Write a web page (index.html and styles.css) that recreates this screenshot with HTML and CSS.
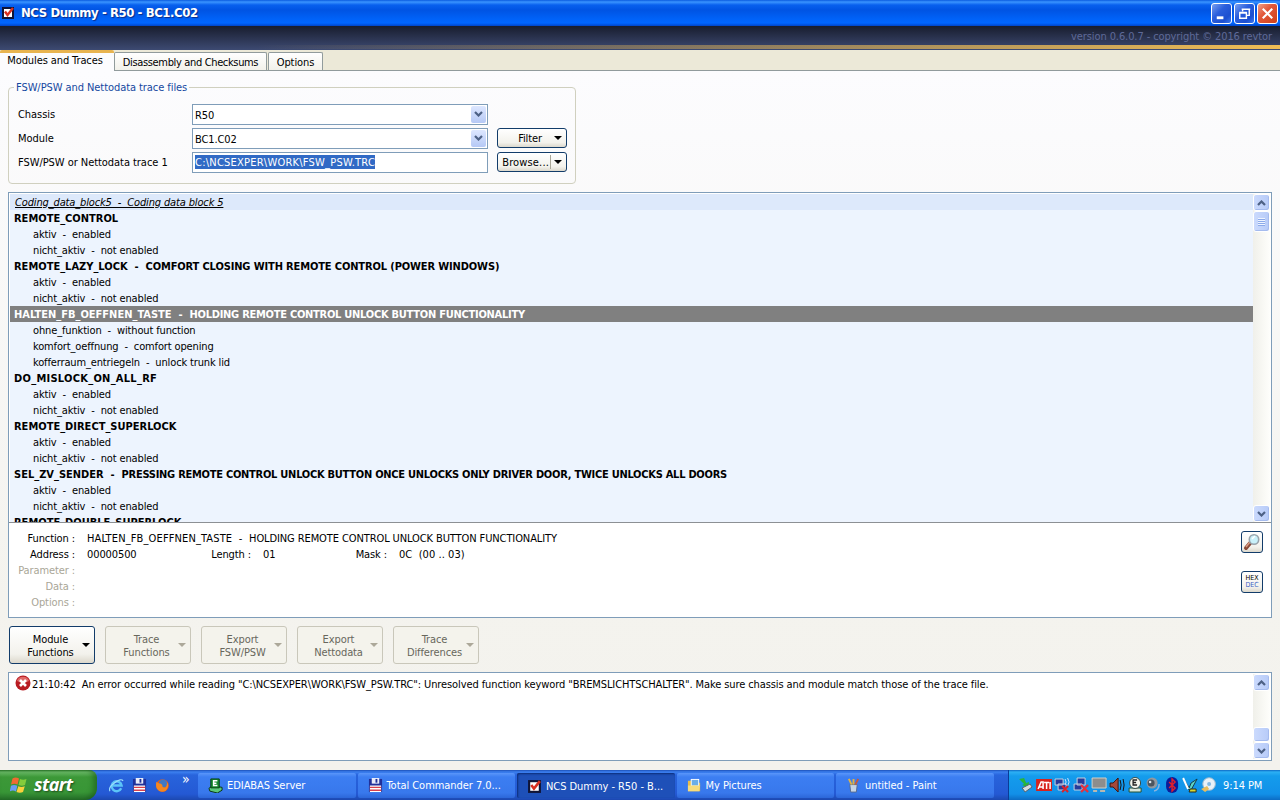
FILE: index.html
```
<!DOCTYPE html>
<html lang="en">
<head>
  <meta charset="UTF-8">
  <meta name="viewport" content="width=device-width, initial-scale=1.0">
  <title>NCS Dummy - R50 - BC1.C02</title>
  <link rel="stylesheet" href="styles.css">
</head>
<body>
  <!-- shared icons -->
  <svg class="defs">
    <symbol id="down" viewBox="0 0 9 6"><path d="M1 1l3.5 3.5L8 1" fill="none" stroke="#4d6185" stroke-width="2.2"/></symbol>
    <symbol id="up" viewBox="0 0 9 6"><path d="M1 5l3.5-3.5L8 5" fill="none" stroke="#4d6185" stroke-width="2.2"/></symbol>
    <symbol id="app" viewBox="0 0 12 12"><path d="M0 0h12v12H0z" fill="#101435"/><path d="M2 2h8v8H2z" fill="#fff"/><path d="M3 4.500l2.500 3.500L11 1" fill="none" stroke="#d83020" stroke-width="2.400"/></symbol>
    <symbol id="floppy" viewBox="0 0 16 16"><path d="M1 1h14v14H1z" fill="#20309a"/><path d="M4 0h8v6H4z" fill="#e8ecfa"/><path d="M8 1h2v4H8z" fill="#20309a"/><path d="M2 8h12v7H2z" fill="#fff"/><path d="M2 10h12M2 13h12" stroke="#d8404c" stroke-width="1.5"/></symbol>
    <symbol id="ediabas" viewBox="0 0 16 16"><path d="M1 11l4-3 10 2v3l-5 3-8-2z" fill="#5cc878" stroke="#05320f"/><path d="M3 1h9v9.500H3z" fill="#178c2e" stroke="#06400f"/><path d="M10 3H6v5h4M6 5.500h3" fill="none" stroke="#fff" stroke-width="1.6"/></symbol>
  </svg>

  <div class="titlebar">
    <svg class="app-icon"><use href="#app"/></svg>
    <span class="title">NCS Dummy - R50 - BC1.C02</span>
    <div class="window-buttons">
      <div class="win-btn"><svg viewBox="0 0 20 20"><path d="M5 14.500h7" stroke="#fff" stroke-width="3"/></svg></div>
      <div class="win-btn"><svg viewBox="0 0 20 20"><path d="M8 8V5.500h7V12h-3M7 5.500h9" fill="none" stroke="#fff" stroke-width="1.500"/><path d="M5 9.500h7V15H5zM4.500 9h8" fill="none" stroke="#fff" stroke-width="1.500"/></svg></div>
      <div class="win-btn close"><svg viewBox="0 0 20 20"><path d="M5 5l10 10M15 5L5 15" stroke="#fff" stroke-width="2.200"/></svg></div>
    </div>
  </div>

  <div class="banner">version 0.6.0.7 - copyright © 2016 revtor</div>

  <div class="tabs">
    <div class="tab active">Modules and Traces</div>
    <div class="tab checksums">Disassembly and Checksums</div>
    <div class="tab options">Options</div>
  </div>

  <main>
    <fieldset class="files">
      <legend>FSW/PSW and Nettodata trace files</legend>
      <div class="field">
        <label>Chassis</label>
        <div class="combo">R50<span class="drop"><svg><use href="#down"/></svg></span></div>
      </div>
      <div class="field">
        <label>Module</label>
        <div class="combo">BC1.C02<span class="drop"><svg><use href="#down"/></svg></span></div>
        <button class="small-btn filter"><span>Filter</span><i class="arrow"></i></button>
      </div>
      <div class="field">
        <label>FSW/PSW or Nettodata trace 1</label>
        <div class="combo"><span class="selected">C:\NCSEXPER\WORK\FSW_PSW.TRC</span></div>
        <button class="small-btn browse"><span>Browse...</span><i class="split"></i><i class="arrow"></i></button>
      </div>
    </fieldset>

    <div class="panel">
      <div class="list-area">
        <div class="list">
          <div class="row block"><u>Coding_data_block5&nbsp; -&nbsp; Coding data block 5</u></div>
          <div class="row func"><span class="key">REMOTE_CONTROL</span></div>
          <div class="row">aktiv&nbsp; -&nbsp; enabled</div>
          <div class="row">nicht_aktiv&nbsp; -&nbsp; not enabled</div>
          <div class="row func lazy"><span class="key">REMOTE_LAZY_LOCK&nbsp; -&nbsp; </span>COMFORT CLOSING WITH REMOTE CONTROL (POWER WINDOWS)</div>
          <div class="row">aktiv&nbsp; -&nbsp; enabled</div>
          <div class="row">nicht_aktiv&nbsp; -&nbsp; not enabled</div>
          <div class="row func current"><span class="key">HALTEN_FB_OEFFNEN_TASTE&nbsp; -&nbsp; </span>HOLDING REMOTE CONTROL UNLOCK BUTTON FUNCTIONALITY</div>
          <div class="row">ohne_funktion&nbsp; -&nbsp; without function</div>
          <div class="row">komfort_oeffnung&nbsp; -&nbsp; comfort opening</div>
          <div class="row">kofferraum_entriegeln&nbsp; -&nbsp; unlock trunk lid</div>
          <div class="row func"><span class="key wide">DO_MISLOCK_ON_ALL_RF</span></div>
          <div class="row">aktiv&nbsp; -&nbsp; enabled</div>
          <div class="row">nicht_aktiv&nbsp; -&nbsp; not enabled</div>
          <div class="row func"><span class="key">REMOTE_DIRECT_SUPERLOCK</span></div>
          <div class="row">aktiv&nbsp; -&nbsp; enabled</div>
          <div class="row">nicht_aktiv&nbsp; -&nbsp; not enabled</div>
          <div class="row func"><span class="key">SEL_ZV_SENDER&nbsp; -&nbsp; </span>PRESSING REMOTE CONTROL UNLOCK BUTTON ONCE UNLOCKS ONLY DRIVER DOOR, TWICE UNLOCKS ALL DOORS</div>
          <div class="row">aktiv&nbsp; -&nbsp; enabled</div>
          <div class="row">nicht_aktiv&nbsp; -&nbsp; not enabled</div>
          <div class="row func"><span class="key">REMOTE_DOUBLE_SUPERLOCK</span></div>
        </div>
        <div class="scrollbar">
          <div class="sb-btn"><svg><use href="#up"/></svg></div>
          <div class="thumb grip"><i></i></div>
          <div class="sb-btn last"><svg><use href="#down"/></svg></div>
        </div>
      </div>
      <div class="info">
        <div class="details">
          <div class="line"><b>Function :</b><span class="name">HALTEN_FB_OEFFNEN_TASTE&nbsp; -&nbsp;&nbsp;</span><span>HOLDING REMOTE CONTROL UNLOCK BUTTON FUNCTIONALITY</span></div>
          <div class="line"><b>Address :</b><span class="address">00000500</span><b class="length">Length :</b><span class="len-value">01</span><b class="mask">Mask :</b><span class="mask-value">0C&nbsp; (00 .. 03)</span></div>
          <div class="line off"><b>Parameter :</b></div>
          <div class="line off"><b>Data :</b></div>
          <div class="line off"><b>Options :</b></div>
        </div>
        <div class="tools">
          <button class="tool-btn"><svg viewBox="0 0 18 18"><path d="M3 15l5-6" stroke="#8a4a38" stroke-width="4" stroke-linecap="round"/><path d="M3 14l4-5" stroke="#d89a80" stroke-width="1.500"/><circle cx="11" cy="6.500" r="4.700" fill="#c9f1fa" stroke="#98a4ac" stroke-width="1.600"/><path d="M9 6l3-3" stroke="#fff" stroke-width="1.500"/></svg></button>
          <button class="tool-btn hex">HEX<br><em>DEC</em></button>
        </div>
      </div>
    </div>

    <div class="actions">
      <button class="action"><span>Module<br>Functions</span><i class="arrow"></i></button>
      <button class="action" disabled><span>Trace<br>Functions</span><i class="arrow"></i></button>
      <button class="action" disabled><span>Export<br>FSW/PSW</span><i class="arrow"></i></button>
      <button class="action" disabled><span>Export<br>Nettodata</span><i class="arrow"></i></button>
      <button class="action" disabled><span>Trace<br>Differences</span><i class="arrow"></i></button>
    </div>

    <div class="log">
      <div class="log-line">
        <svg viewBox="0 0 16 16"><circle cx="8" cy="8" r="7.500" fill="#b81c22"/><path d="M2 6a6.300 6 0 0 1 12 0q-6 3-12 0z" fill="#e06a68"/><path d="M5 5l6 6M11 5l-6 6" stroke="#fff" stroke-width="2.600"/></svg>
        <span>21:10:42&nbsp; An error occurred while reading "C:\NCSEXPER\WORK\FSW_PSW.TRC": Unresolved function keyword "BREMSLICHTSCHALTER". Make sure chassis and module match those of the trace file.</span>
      </div>
      <div class="scrollbar">
        <div class="sb-btn"><svg><use href="#up"/></svg></div>
        <div class="thumb end"></div>
        <div class="sb-btn"><svg><use href="#down"/></svg></div>
      </div>
    </div>
  </main>

  <div class="taskbar">
    <div class="start">
      <svg viewBox="0 0 18 18"><path d="M2.500 2.500q3-2 6.500 0L7.500 8.500Q4.500 7 1 8.500z" fill="#f06a32"/><path d="M10 3q3 1.500 6.500 0L15 9q-3 1.500-6.500 0z" fill="#85cc3c"/><path d="M1 9.800q3-1.500 6.300 0L6 15.500q-3-1.800-6.300 0z" fill="#6b9cf5"/><path d="M8.300 10.300q3 1.500 6.500 0L13 16q-3 1.500-6.500 0z" fill="#fbd03c"/></svg>
      <span>start</span>
    </div>
    <div class="quick">
      <svg viewBox="0 0 16 16"><path d="M13 11a5.300 5.300 0 1 1 .4-3H4" fill="none" stroke="#5cc4f8" stroke-width="2.600"/><path d="M1 14Q-1 10 6 5T15 3" fill="none" stroke="#9adcfc" stroke-width="1.300"/></svg>
      <svg viewBox="0 0 16 16"><use href="#floppy"/></svg>
      <svg viewBox="0 0 16 16"><circle cx="8" cy="8" r="6.700" fill="#e85a18"/><circle cx="8.500" cy="6" r="4.500" fill="#3f78c4"/><path d="M1.500 4q2 2 5 2l1.500 2q-1 2 3 2 2.500-2 1.500-6 3.500 5-1 9.500-6 3-9.500-2-1.500-3-.5-7.500z" fill="#f5871f"/></svg>
      <span>»</span>
    </div>
    <div class="tasks">
      <div class="task"><svg viewBox="0 0 16 16"><use href="#ediabas"/></svg>EDIABAS Server</div>
      <div class="task"><svg viewBox="0 0 16 16"><use href="#floppy"/></svg>Total Commander 7.0...</div>
      <div class="task pressed"><svg viewBox="-1 -1 14 14"><use href="#app" width="12" height="12"/></svg>NCS Dummy - R50 - B...</div>
      <div class="task"><svg viewBox="0 0 16 16"><path d="M1 3h6l1 2h6v9H1z" fill="#e8bd48"/><path d="M4 1h9v8H4z" fill="#fff"/><path d="M5 2h7v6H5z" fill="#6baee8"/><path d="M1 8h13l-1 6H1z" fill="#f7dc7c"/></svg>My Pictures</div>
      <div class="task"><svg viewBox="0 0 16 16"><path d="M4 7h8l-1 8H5z" fill="#c7d4e4" stroke="#546a90"/><path d="M6 7L3 1M8 7V1" stroke="#e3b341" stroke-width="2"/><path d="M10 7l3-6" stroke="#c75b3a" stroke-width="2"/></svg>untitled - Paint</div>
    </div>
    <div class="tray">
      <svg viewBox="0 0 16 16"><path d="M1 2l5-1 2 5 3-1-1 6-6-3 2-1z" fill="#29b43c"/><path d="M4 11l8-4 2 3-7 5z" fill="#d5dbe0" stroke="#57626e"/></svg>
      <svg viewBox="0 0 16 16"><path d="M0 2h16v12H0z" fill="#d8231c"/><path d="M2 12l3-7h2v7M3 10h4M8 5.500h5M10.500 5v7M14 5v7" fill="none" stroke="#fff" stroke-width="1.500"/></svg>
      <svg viewBox="0 0 16 16"><path d="M1 2h8v6H1zM4 7h8v6H4z" fill="#263c9c" stroke="#c6cfdd"/><path d="M11 2q2 3 0 6M13.500 1q3 4 0 8" fill="none" stroke="#c6e0ff"/><path d="M8 9l6 6M14 9l-6 6" stroke="#d8242c" stroke-width="2"/></svg>
      <svg viewBox="0 0 16 16"><path d="M4 1h8v7H4zM1 7h8v6H1z" fill="#263c9c" stroke="#c6cfdd"/><path d="M8 8l7 7M15 8l-7 7" stroke="#e8303a" stroke-width="2.200"/></svg>
      <svg viewBox="0 0 16 16"><path d="M1 1h14v10H1z" fill="#8d8d8d" stroke="#d2d0c6"/><path d="M2 13h4v2H2zM9 13h5v2H9z" fill="#b8b8b0"/></svg>
      <svg viewBox="0 0 16 16"><path d="M1 6h3l5-5v14L4 10H1z" fill="#a5483a" stroke="#40150e"/><path d="M11 3q2 5 0 10M14 2q2 6 0 12" fill="none" stroke="#161616"/></svg>
      <svg viewBox="0 0 16 16"><path d="M2 11h12v4H2z" fill="#d6e6dc" stroke="#235234"/><circle cx="8" cy="6" r="5.500" fill="#f5f7ee" stroke="#3c4c46"/><path d="M10 3H6v5h4M6 5.500h3" fill="none" stroke="#222" stroke-width="1.300"/></svg>
      <svg viewBox="0 0 16 16"><circle cx="7" cy="6" r="5.500" fill="#9299a0"/><circle cx="6" cy="6" r="3.500" fill="#4c555e"/><circle cx="5" cy="5" r="1.300" fill="#dce3e8"/><path d="M9 14q5-1 5-7" fill="none" stroke="#8cb4dd" stroke-width="1.500"/></svg>
      <svg viewBox="0 0 16 16"><rect x="2" width="12" height="16" rx="6" fill="#0b1c99"/><path d="M5 5l6 6-3 3V2l3 3-6 6" fill="none" stroke="#e0202c" stroke-width="1.500"/></svg>
      <svg viewBox="0 0 16 16"><path d="M1 1l5 11 3 1 6-11-6 4-2 5z" fill="#5ed3c4" stroke="#153c48"/><path d="M1 1l5 11" stroke="#fff" stroke-width="2"/><path d="M8 12h6v3H7z" fill="#d8d832" stroke="#2c2c14"/></svg>
      <svg viewBox="0 0 16 16"><circle cx="9" cy="7" r="6.300" fill="#e8f1f8" stroke="#9cb8cc"/><circle cx="9" cy="7" r="2" fill="#82b8e3"/><path d="M1 12l6-3 2 3-4 3z" fill="#e8bd5c"/></svg>
      <span class="clock">9:14 PM</span>
    </div>
  </div>
</body>
</html>
```
FILE: styles.css
```
* {
  box-sizing: border-box;
}
body {
  margin: 0;
  width: 1280px;
  height: 800px;
  overflow: hidden;
  display: flex;
  flex-direction: column;
  font-family: Tahoma, 'DejaVu Sans Condensed', 'DejaVu Sans', sans-serif;
  font-size: 11px;
  letter-spacing: -0.1px;
  line-height: 16px;
  color: #000;
  background: #f3f2ed;
  white-space: nowrap;
}
.defs {
  display: none;
}
svg {
  flex: none;
}
button {
  font: inherit;
  letter-spacing: inherit;
  color: #000;
  padding: 0;
  border: 1px solid #123c6a;
  border-radius: 3px;
  background: linear-gradient(#fff, #f3f2ec 75%, #dcd8cc);
}

/* Title bar */
.titlebar {
  flex: none;
  height: 26px;
  display: flex;
  align-items: center;
  padding: 0 2px;
  background: linear-gradient(#0a5be0 0, #3a94ff 2px, #0860ee 5px, #0054e3 10px, #0062f8 19px, #0066ff 23px, #0044c8 26px);
}
.app-icon {
  width: 12px;
  height: 12px;
}
.title {
  margin-left: 7px;
  font-size: 13px;
  letter-spacing: -0.43px;
  font-weight: bold;
  color: #fff;
  text-shadow: 1px 1px 1px #0a2b86;
}
.window-buttons {
  display: flex;
  gap: 2px;
  margin-left: auto;
}
.win-btn {
  width: 21px;
  height: 21px;
  border: 1px solid #fff;
  border-radius: 3px;
  background: linear-gradient(135deg, #7aa0f0, #2a5edc 40%, #1c4fd0 75%, #3b78f0);
}
.win-btn svg {
  display: block;
  width: 19px;
  height: 19px;
}
.win-btn.close {
  background: linear-gradient(135deg, #f0a088, #e2583a 40%, #d04018);
}

/* Banner with version */
.banner {
  flex: none;
  height: 24px;
  padding: 3px 8px 0 0;
  text-align: right;
  letter-spacing: -0.1px;
  color: #5f6a98;
  background:
    linear-gradient(90deg, rgba(240,190,80,0) 20%, #efbd55) 0 19px / 100% 4px no-repeat,
    linear-gradient(#181d2e, #3d4a72);
}

/* Tabs */
.tabs {
  flex: none;
  height: 21px;
  display: flex;
  align-items: flex-end;
  background: #ece9d8;
  border-bottom: 1px solid #919b9c;
}
.tab {
  height: 18px;
  padding-top: 2px;
  text-align: center;
  border: 1px solid #919b9c;
  border-bottom: none;
  border-radius: 2px 2px 0 0;
  background: linear-gradient(#fff, #f2f1ea);
}
.tab.active {
  width: 114px;
  height: 21px;
  margin-bottom: -1px;
  padding: 0 4px 0 0;
  border: none;
  border-top: 3px solid #e8b450;
  background: #fcfcfe;
}
.checksums {
  width: 153px;
  margin-right: 1px;
  letter-spacing: -0.35px;
}
.options {
  width: 55px;
}

/* Page */
main {
  flex: none;
  height: 699px;
  padding: 8px 8px 0;
  background: linear-gradient(#fcfcfe, #f4f3ee 75%, #f3f2ed);
}
.files {
  width: 568px;
  height: 105px;
  margin: 0;
  padding: 8px 0 0 9px;
  border: 1px solid #d0d0bf;
  border-radius: 4px;
}
.files legend {
  height: 16px;
  margin-left: -4px;
  padding: 0 2px;
  line-height: 18px;
  letter-spacing: -0.07px;
  color: #1548a0;
}
.field {
  display: flex;
  align-items: center;
  height: 22px;
  margin-bottom: 2px;
}
.field label {
  width: 174px;
  padding-top: 2px;
  letter-spacing: -0.05px;
}
.combo {
  width: 296px;
  height: 21px;
  display: flex;
  padding: 0 1px 0 2px;
  line-height: 21px;
  border: 1px solid #7f9db9;
  background: #fff;
}
.drop {
  width: 15px;
  height: 17px;
  margin: 1px 0 0 auto;
  display: flex;
  align-items: center;
  justify-content: center;
  border-radius: 2px;
  background: linear-gradient(#dde7ff, #b5c8f5);
}
.drop svg,
.sb-btn svg {
  width: 9px;
  height: 6px;
}
.selected {
  height: 14px;
  margin-top: 2px;
  line-height: 16px;
  letter-spacing: 0.23px;
  color: #fff;
  background: #316ac5;
}
.small-btn {
  width: 70px;
  height: 20px;
  margin-left: 9px;
  display: flex;
  align-items: center;
  justify-content: flex-end;
  padding-right: 4px;
}
.small-btn span {
  padding-top: 2px;
}
.arrow {
  border: 4px solid transparent;
  border-top-color: currentColor;
  border-bottom: none;
}
.filter .arrow {
  margin-left: 12px;
}
.browse span {
  letter-spacing: 0.15px;
}
.split {
  width: 1px;
  height: 14px;
  margin: 0 3px 0 1px;
  background: #a9a697;
}

/* Function list */
.panel {
  height: 426px;
  margin-top: 8px;
  border: 1px solid #7f9db9;
  background: #fff;
}
.list-area {
  height: 330px;
  display: flex;
  padding: 1px 1px 0;
  border-bottom: 1px solid #8c9094;
}
.list {
  flex: 1;
  overflow: hidden;
  background: #edf4fe;
}
.row {
  height: 16px;
  padding-left: 23px;
  line-height: 18px;
  letter-spacing: -0.14px;
}
.row.block {
  padding-left: 5px;
  font-style: italic;
  background: #dde9fb;
}
.row.func {
  padding-left: 4px;
  font-weight: bold;
  letter-spacing: -0.26px;
}
.row.func.lazy {
  letter-spacing: -0.13px;
}
.row .key {
  letter-spacing: 0;
}
.row .key.wide {
  letter-spacing: 0.27px;
}
.row.current {
  color: #fff;
  background: #808080;
}
.scrollbar {
  width: 17px;
  display: flex;
  flex-direction: column;
  background: linear-gradient(90deg, #f0f0ea, #fefefb);
}
.sb-btn,
.thumb {
  height: 17px;
  display: flex;
  align-items: center;
  justify-content: center;
  border: 1px solid #fff;
  border-radius: 3px;
  background: linear-gradient(90deg, #cbdafd, #b7cbf8);
  box-shadow: inset -1px -1px #a5bbee;
}
.sb-btn.last {
  margin-top: auto;
}
.thumb.grip {
  height: 21px;
}
.grip i {
  width: 7px;
  height: 8px;
  background: repeating-linear-gradient(#eef4ff 0 1px, #8caaea 1px 2px);
}
.thumb.end {
  height: 15px;
  margin-top: auto;
}

/* Details */
.info {
  display: flex;
  justify-content: space-between;
  padding: 7px 8px 0 0;
}
.line {
  height: 16px;
  display: flex;
  line-height: 18px;
}
.line b {
  width: 66px;
  margin-right: 12px;
  text-align: right;
  font-weight: normal;
}
.line .name {
  letter-spacing: 0.13px;
}
.line .address {
  width: 98px;
}
.line .len-value {
  width: 58px;
}
.line .mask-value {
  letter-spacing: 0.05px;
}
.line.off {
  color: #a9a697;
}
.tools {
  display: flex;
  flex-direction: column;
  gap: 18px;
  padding-top: 1px;
}
.tool-btn {
  width: 22px;
  height: 22px;
  display: flex;
  align-items: center;
  justify-content: center;
}
.tool-btn svg {
  width: 18px;
  height: 18px;
}
.tool-btn.hex {
  display: block;
  font-size: 7px;
  line-height: 7px;
  letter-spacing: 0;
}
.hex em {
  font-style: normal;
  color: #3b62c4;
}

/* Action buttons */
.actions {
  display: flex;
  gap: 10px;
  padding: 8px 1px;
}
.action {
  width: 86px;
  height: 38px;
  display: flex;
  align-items: center;
  justify-content: flex-end;
  padding-right: 4px;
  line-height: 13px;
}
.action span {
  flex: 1;
  padding: 1px 0 0 9px;
}
.action:disabled {
  color: #68675c;
  border-color: #c9c7ba;
  background: #f4f3ec;
}
.action:disabled .arrow {
  color: #aca899;
}

/* Log */
.log {
  height: 89px;
  display: flex;
  justify-content: space-between;
  padding: 1px;
  border: 1px solid #7f9db9;
  background: #fff;
}
.log-line {
  height: 20px;
  display: flex;
  align-items: center;
  padding-left: 5px;
}
.log-line svg {
  width: 16px;
  height: 16px;
  margin: -2px 1px 0 0;
}
.log-line span {
  padding-top: 2px;
}

/* Taskbar */
.taskbar {
  flex: none;
  height: 30px;
  display: flex;
  color: #fff;
  background: linear-gradient(#1c50b8 0, #3c80f0 2px, #2864dc 5px, #2459d4 24px, #1c48b0 30px);
}
.start {
  width: 97px;
  display: flex;
  align-items: center;
  padding-left: 10px;
  border-radius: 0 8px 12px 0;
  background: linear-gradient(#2d7c2c 0, #6bbb68 2px, #3c9838 7px, #389636 22px, #26702a 30px);
  box-shadow: inset -4px 0 5px rgba(20,80,20,0.5);
}
.start svg {
  width: 18px;
  height: 18px;
}
.start span {
  margin: -2px 0 0 6px;
  font-family: 'Open Sans', sans-serif;
  font-size: 18px;
  font-weight: bold;
  font-style: italic;
  letter-spacing: -0.6px;
  text-shadow: 1px 1px 2px #1c4a1c;
}
.quick {
  width: 101px;
  display: flex;
  align-items: center;
  gap: 8px;
  padding-left: 12px;
}
.quick svg,
.task svg {
  width: 15px;
  height: 15px;
}
.quick span {
  margin: -12px 0 0 4px;
  font-size: 14px;
}
.tasks {
  width: 810px;
  display: flex;
  gap: 2px;
  padding: 3px 0 2px;
}
.task {
  width: 157.500px;
  display: flex;
  align-items: center;
  gap: 4px;
  padding-left: 10px;
  letter-spacing: -0.05px;
  border-radius: 2px;
  background: linear-gradient(#5a96fa, #3c7ef2 4px, #3878ec 20px, #2c66d8);
}
.task.pressed {
  padding-top: 2px;
  background: #1e50b8;
  box-shadow: inset 1px 1px 2px #0c2c78;
}
.tray {
  flex: 1;
  display: flex;
  align-items: center;
  gap: 2px;
  padding-left: 9px;
  border-left: 1px solid #0a3c98;
  background: linear-gradient(#0e68c4 0, #2cb0f4 2px, #149cec 6px, #1290e8 24px, #0c6cc4 30px);
}
.tray svg {
  width: 16.200px;
  height: 16px;
}
.clock {
  margin-left: 5px;
  padding-top: 1px;
}
```
